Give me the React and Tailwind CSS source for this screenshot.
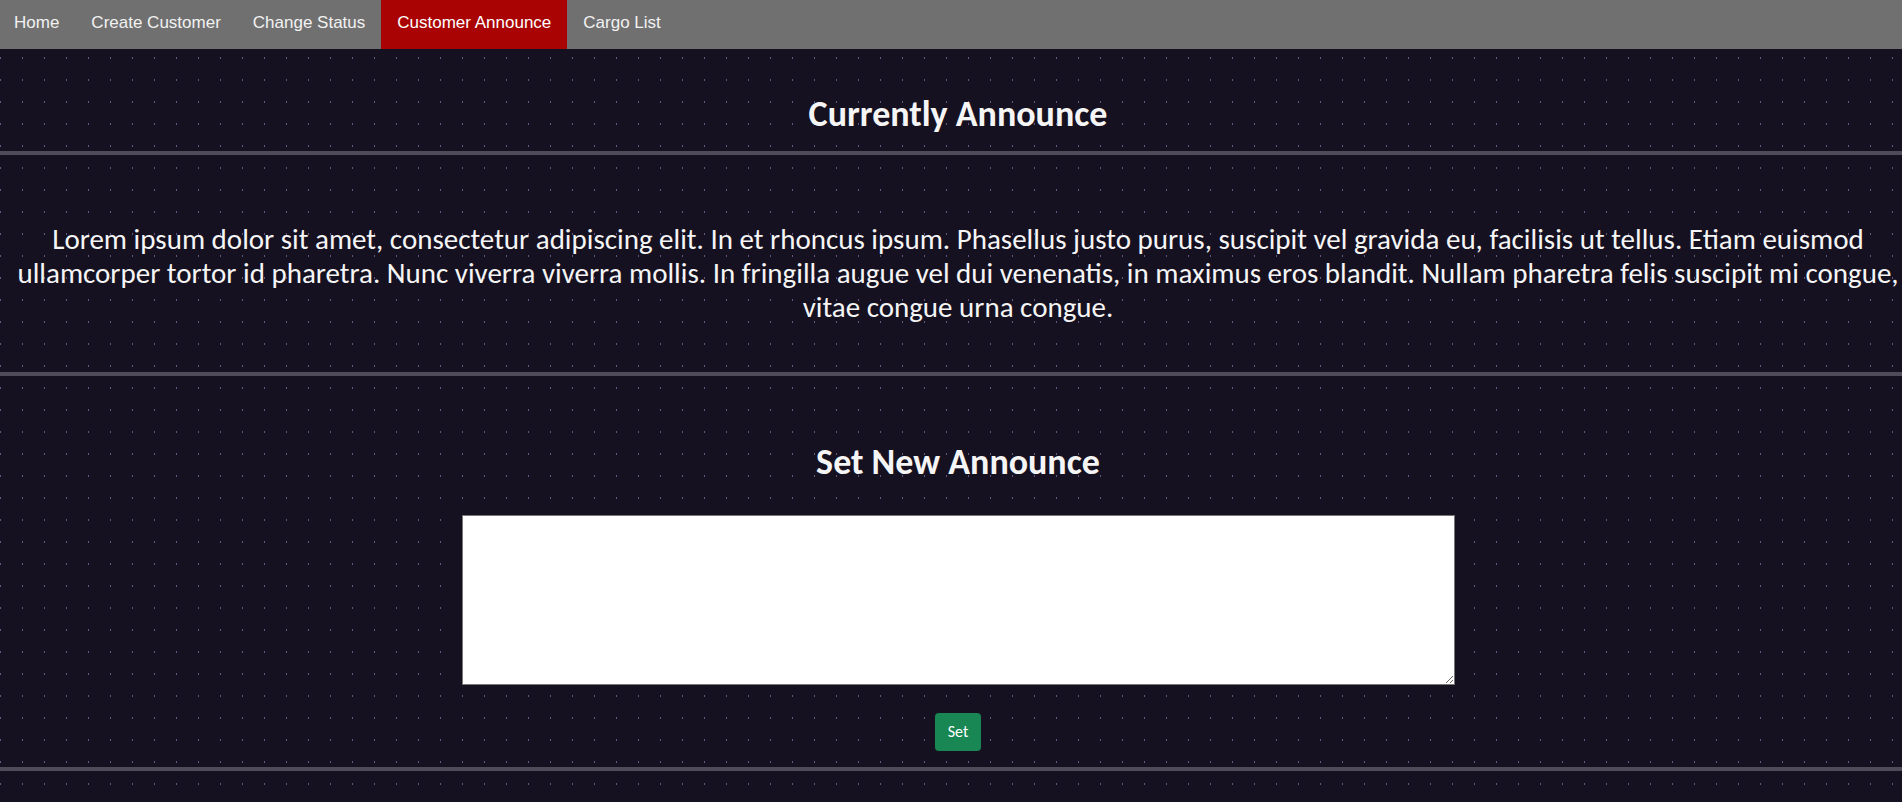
const links = [
  { label: "Home" },
  { label: "Create Customer" },
  { label: "Change Status" },
  { label: "Customer Announce", active: true },
  { label: "Cargo List" },
];

function NavLink({ label, active }) {
  return (
    <a
      href="#"
      aria-current={active ? "page" : undefined}
      className={
        active
          ? "bg-[#a90303] px-4 pt-3 pb-4 text-white"
          : "px-4 pt-3 pb-4 text-[#f2f2f2] first:pl-3.5"
      }
    >
      {label}
    </a>
  );
}

export default function App() {
  return (
    <div className="min-h-screen bg-[#161121] bg-[linear-gradient(to_right,transparent_1px,#161121_1px),linear-gradient(to_bottom,#62587f_2px,#161121_2px)] bg-[length:22px_22px] bg-[position:0_13px] font-[Calibri,Carlito,Lato,sans-serif] text-[#f5f5f5]">
      <nav className="flex flex-wrap bg-[#707070] font-['Liberation_Sans',Arial,sans-serif] text-[17px] leading-[21px]">
        {links.map((link) => (
          <NavLink key={link.label} {...link} />
        ))}
      </nav>
      <main className="text-center">
        <section className="border-b-4 border-[#504b58] pt-11 pb-4 pl-3.5">
          <h1 className="text-4xl leading-[42px] font-bold">Currently Announce</h1>
        </section>
        <section className="border-b-4 border-[#504b58] pt-[67px] pb-12 pl-3.5">
          <p className="text-[29px] leading-[34px]">
            Lorem ipsum dolor sit amet, consectetur adipiscing elit. In et rhoncus ipsum. Phasellus
            justo purus, suscipit vel gravida eu, facilisis ut tellus. Etiam euismod ullamcorper
            tortor id pharetra. Nunc viverra viverra mollis. In fringilla augue vel dui venenatis,
            in maximus eros blandit. Nullam pharetra felis suscipit mi congue, vitae congue urna
            congue.
          </p>
        </section>
        <section className="border-b-4 border-[#504b58] pt-[65px] pb-4 pl-3.5">
          <form className="flex flex-col items-center" onSubmit={(e) => e.preventDefault()}>
            <label htmlFor="announce" className="text-4xl leading-[42px] font-bold">
              Set New Announce
            </label>
            <textarea
              id="announce"
              className="mt-8 h-[170px] w-full max-w-[993px] border border-[#767676] bg-white p-2 text-base text-black"
            />
            <button
              type="submit"
              className="mt-7 rounded bg-[#198754] px-[13px] py-[7px] text-base leading-6 text-white"
            >
              Set
            </button>
          </form>
        </section>
      </main>
    </div>
  );
}
